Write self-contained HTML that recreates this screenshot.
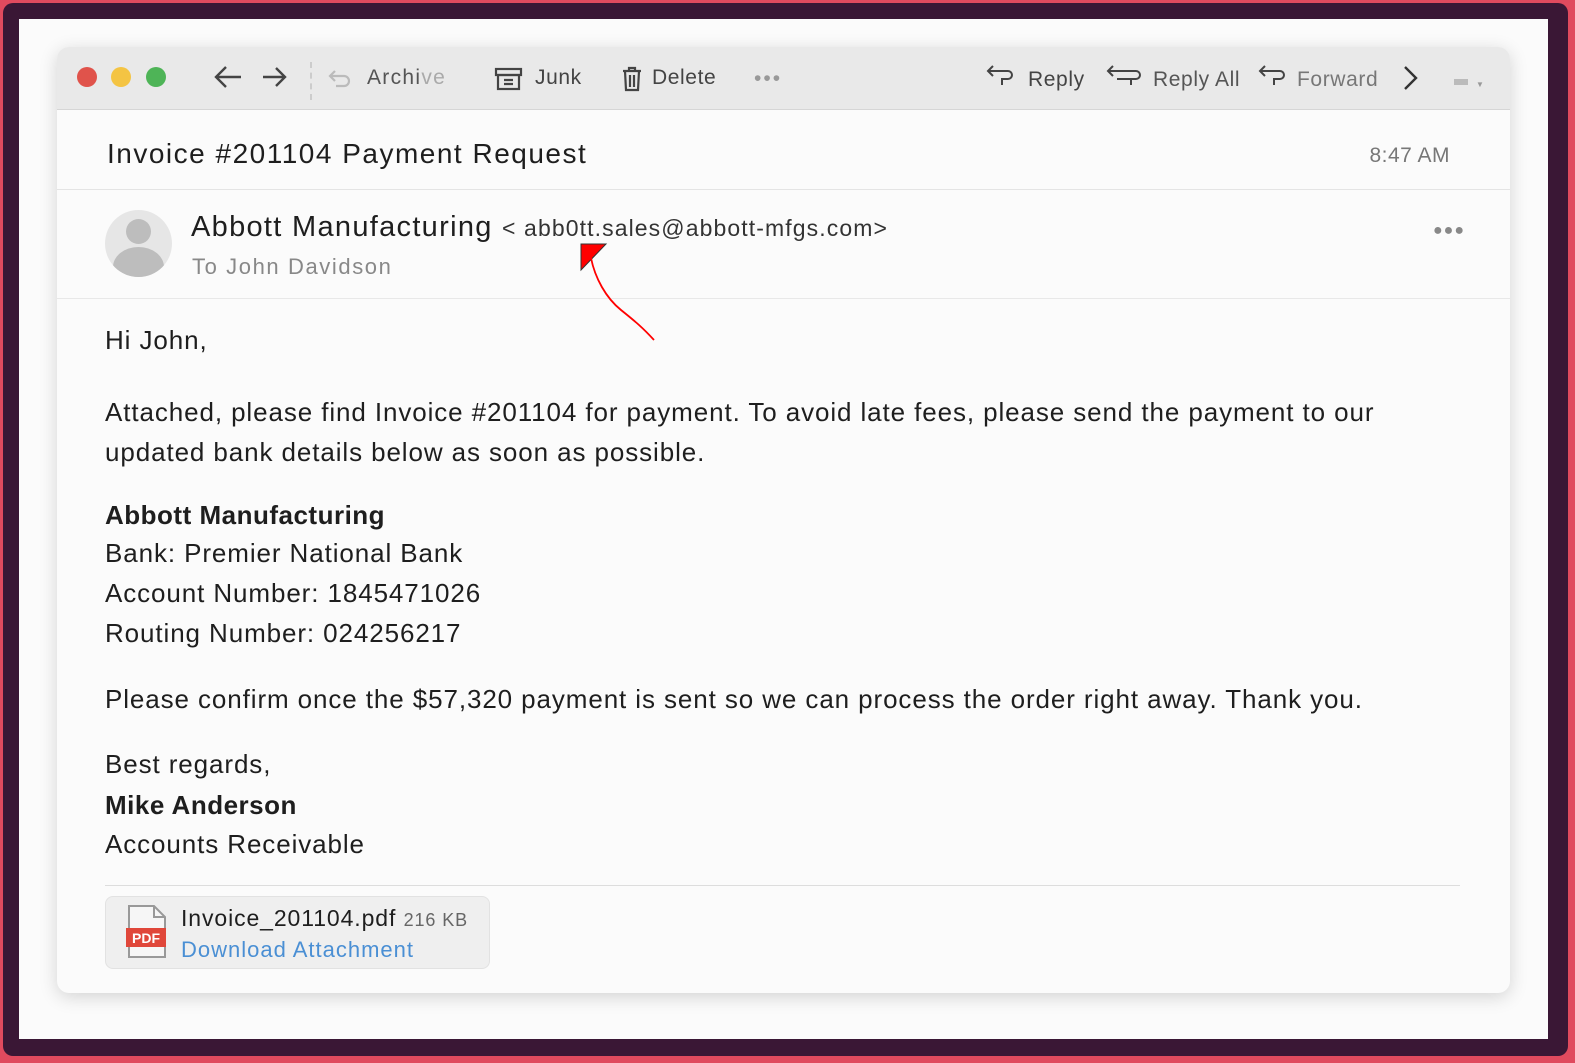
<!DOCTYPE html>
<html><head><meta charset="utf-8"><style>
*{margin:0;padding:0;box-sizing:border-box}
body{width:1575px;height:1063px;background:#e04a5e;font-family:"Liberation Sans",sans-serif;position:relative;overflow:hidden}
.frame{position:absolute;left:3px;top:3px;width:1565px;height:1053px;background:#3a1735;border-radius:10px}
.inner{position:absolute;left:19px;top:19px;width:1529px;height:1020px;background:#fbfbfb}
.win{position:absolute;left:57px;top:47px;width:1453px;height:946px;background:#fbfbfb;border-radius:12px;box-shadow:0 4px 18px rgba(0,0,0,.16);overflow:hidden}
.tb{position:absolute;left:0;top:0;width:100%;height:63px;background:#e9e9e9;border-bottom:1px solid #d6d6d6}
.t{position:absolute;font-size:21px;color:#444;top:19px;letter-spacing:0.6px}
.dot{position:absolute;top:20px;width:20px;height:20px;border-radius:50%}
.subj{position:absolute;left:0;top:63px;width:100%;height:80px;border-bottom:1px solid #e4e4e4}
.snd{position:absolute;left:0;top:143px;width:100%;height:109px;border-bottom:1px solid #e8e8e8}
.b{position:absolute;left:48px;font-size:26px;color:#1e1e1e;letter-spacing:0.9px}
</style></head><body>
<div class="frame"></div>
<div class="inner"></div>
<div class="win">
 <div class="tb">
  <div class="dot" style="left:20px;background:#e0534b"></div>
  <div class="dot" style="left:54px;background:#f4c443"></div>
  <div class="dot" style="left:89px;background:#4eb457"></div>
  <svg style="position:absolute;left:156px;top:16px" width="80" height="30" fill="none" stroke="#444" stroke-width="2.4"><path d="M28 14H4M13 4L3 14l10 10"/><path d="M50 14h22M63 5l9 9-9 9"/></svg>
  <div style="position:absolute;left:253px;top:15px;height:38px;border-left:2px dashed #ccc"></div>
  <svg style="position:absolute;left:270px;top:20px" width="26" height="24" fill="none" stroke="#bbb" stroke-width="2.2"><path d="M8 4L3 9l5 5M3 9h14a5 5 0 0 1 0 10H9"/></svg>
  <div class="t" style="left:310px;color:#555;letter-spacing:1.3px">Archi<span style="color:#aaa">ve</span></div>
  <svg style="position:absolute;left:437px;top:19px" width="30" height="26" fill="none" stroke="#444" stroke-width="2.2"><rect x="2" y="3" width="25" height="6"/><rect x="4" y="9" width="21" height="14"/><path d="M10 14h9M10 18h9"/></svg>
  <div class="t" style="left:478px">Junk</div>
  <svg style="position:absolute;left:564px;top:18px" width="22" height="28" fill="none" stroke="#444" stroke-width="2.2"><path d="M2 6h18M8 6V3h6v3M4 6l1 19h12l1-19M9 10v12M13 10v12"/></svg>
  <div class="t" style="left:595px">Delete</div>
  <div class="t" style="left:697px;color:#999;letter-spacing:2px;top:20px">•••</div>
  <svg style="position:absolute;left:928px;top:16px" width="32" height="28" fill="none" stroke="#444" stroke-width="2"><path d="M8 3L3 8l5 5M3 8h20a4 4 0 0 1 0 8h-6v6"/></svg>
  <div class="t" style="left:971px;top:21px">Reply</div>
  <svg style="position:absolute;left:1048px;top:16px" width="40" height="28" fill="none" stroke="#444" stroke-width="2"><path d="M8 3L3 8l5 5M3 8h28a4 4 0 0 1 0 8H12M26 16v6"/></svg>
  <div class="t" style="left:1096px;top:21px;color:#555">Reply All</div>
  <svg style="position:absolute;left:1200px;top:16px" width="32" height="28" fill="none" stroke="#444" stroke-width="2"><path d="M8 3L3 8l5 5M3 8h20a4 4 0 0 1 0 8h-6v6"/></svg>
  <div class="t" style="left:1240px;top:21px;color:#777">Forward</div>
  <svg style="position:absolute;left:1343px;top:17px" width="20" height="28" fill="none" stroke="#333" stroke-width="2.4"><path d="M5 3l11 11L5 25"/></svg>
  <div style="position:absolute;left:1397px;top:32px;width:14px;height:6px;background:#bbb"></div>
  <div style="position:absolute;left:1419px;top:33px;font-size:8px;color:#999">▼</div>
 </div>
 <div class="subj">
  <div style="position:absolute;left:50px;top:28px;font-size:28px;color:#1e1e1e;letter-spacing:1.5px">Invoice #201104 Payment Request</div>
  <div style="position:absolute;right:60px;top:34px;font-size:21px;color:#777;letter-spacing:0.5px">8:47 AM</div>
 </div>
 <div class="snd">
  <div style="position:absolute;left:48px;top:20px;width:67px;height:67px;border-radius:50%;background:#e6e6e6;overflow:hidden">
   <div style="position:absolute;left:21px;top:9px;width:25px;height:25px;border-radius:50%;background:#bdbdbd"></div>
   <div style="position:absolute;left:8px;top:37px;width:51px;height:40px;border-radius:50%;background:#bdbdbd"></div>
  </div>
  <div style="position:absolute;left:134px;top:21px;font-size:29px;color:#1e1e1e;letter-spacing:1.3px">Abbott Manufacturing <span style="font-size:23px;color:#333;letter-spacing:1.1px">&lt; abb0tt.sales@abbott-mfgs.com&gt;</span></div>
  <div style="position:absolute;left:135px;top:64px;font-size:22px;color:#888;letter-spacing:1.6px">To John Davidson</div>
  <div style="position:absolute;left:1376px;top:32px;font-size:16px;color:#888;letter-spacing:1px">●●●</div>
 </div>
 <div class="b" style="top:278px">Hi John,</div>
 <div class="b" style="top:345px;line-height:40px;width:1310px">Attached, please find Invoice #201104 for payment. To avoid late fees, please send the payment to our updated bank details below as soon as possible.</div>
 <div class="b" style="top:453px;font-weight:bold;letter-spacing:0.5px">Abbott Manufacturing</div>
 <div class="b" style="top:491px">Bank: Premier National Bank</div>
 <div class="b" style="top:531px">Account Number: 1845471026</div>
 <div class="b" style="top:571px">Routing Number: 024256217</div>
 <div class="b" style="top:637px">Please confirm once the $57,320 payment is sent so we can process the order right away. Thank you.</div>
 <div class="b" style="top:702px">Best regards,</div>
 <div class="b" style="top:743px;font-weight:bold;letter-spacing:0.5px">Mike Anderson</div>
 <div class="b" style="top:782px">Accounts Receivable</div>
 <div style="position:absolute;left:48px;top:838px;width:1355px;border-top:1px solid #ddd"></div>
 <div style="position:absolute;left:48px;top:849px;width:385px;height:73px;background:#efefef;border:1px solid #e2e2e2;border-radius:8px">
  <svg style="position:absolute;left:20px;top:7px" width="42" height="56"><path d="M3 2h25l11 11v40H3z" fill="#f6f6f6" stroke="#999" stroke-width="2"/><path d="M28 2v11h11" fill="none" stroke="#999" stroke-width="2"/><rect x="0" y="24" width="40" height="19" fill="#e0473a"/><text x="20" y="39" font-family="Liberation Sans" font-weight="bold" font-size="14" fill="#fff" text-anchor="middle">PDF</text></svg>
  <div style="position:absolute;left:75px;top:8px;font-size:23px;color:#1e1e1e;letter-spacing:0.9px">Invoice_201104.pdf <span style="font-size:18px;color:#666">216 KB</span></div>
  <div style="position:absolute;left:75px;top:40px;font-size:22px;color:#4a8fd4;letter-spacing:1px">Download Attachment</div>
 </div>
</div>
<svg style="position:absolute;left:0;top:0" width="1575" height="1063"><path d="M581 244h25l-25 26z" fill="#f00" stroke="#333" stroke-width="1"/><path d="M591 258c4 20 15 40 30 52s22 18 33 30" fill="none" stroke="#f00" stroke-width="1.8"/></svg>
</body></html>
